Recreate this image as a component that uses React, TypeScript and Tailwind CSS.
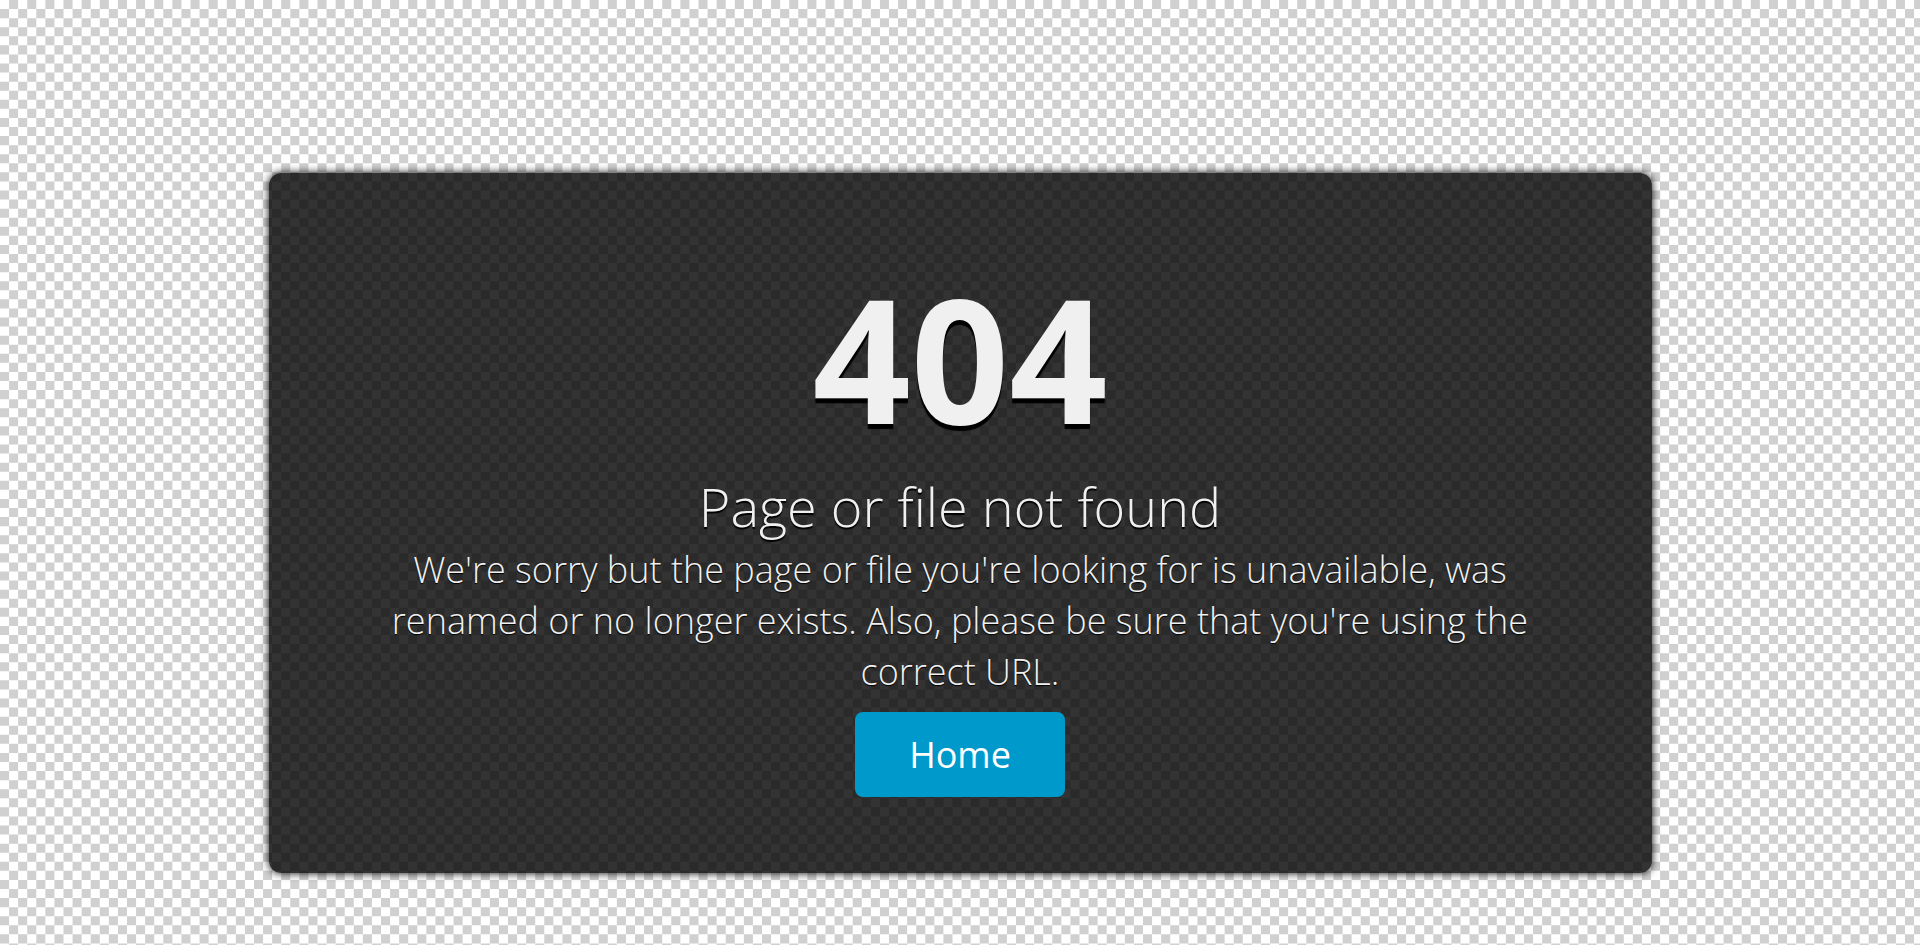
export default function App() {
  return (
    <main className="flex min-h-screen flex-col items-center bg-white bg-[url('data:image/svg+xml,%3Csvg%20xmlns=%22http://www.w3.org/2000/svg%22%20width=%22127%22%20height=%22127%22%20viewBox=%220%200%2014%2014%22%3E%3Cpath%20stroke=%22%23d0d0d0%22%20stroke-dasharray=%221%22%20d=%22M1%20.5h13M0%201.5h14M1%202.5h13M0%203.5h14M1%204.5h13M0%205.5h14M1%206.5h13M0%207.5h14M1%208.5h13M0%209.5h14M1%2010.5h13M0%2011.5h14M1%2012.5h13M0%2013.5h14%22/%3E%3C/svg%3E')] px-4 pt-[173px] pb-[71px] font-['Open_Sans','Noto_Sans',sans-serif]">
      <section className="flex w-full max-w-[1383px] flex-col items-center rounded-xl bg-black/80 px-[120px] pt-[84px] pb-[76px] text-center text-[#f0f0f0] shadow-[0_0_8px_#000000]">
        <h1 className="mb-[11px] text-[172px] leading-[200px] font-bold [text-shadow:0_5px_1px_#000000]">404</h1>
        <h2 className="text-[54px] leading-[76px] font-light [text-shadow:0_2px_1px_#000000]">
          Page or file not found
        </h2>
        <p className="text-[36px] leading-[51px] font-light [text-shadow:0_1px_1px_#000000]">
          We're sorry but the page or file you're looking for is unavailable, was renamed or no longer exists. Also,
          please be sure that you're using the correct URL.
        </p>
        <a
          href="/"
          className="mt-[15px] rounded-lg bg-[#0099cc] px-[54px] py-4 text-[36px] leading-[53px] text-white"
        >
          Home
        </a>
      </section>
    </main>
  );
}
